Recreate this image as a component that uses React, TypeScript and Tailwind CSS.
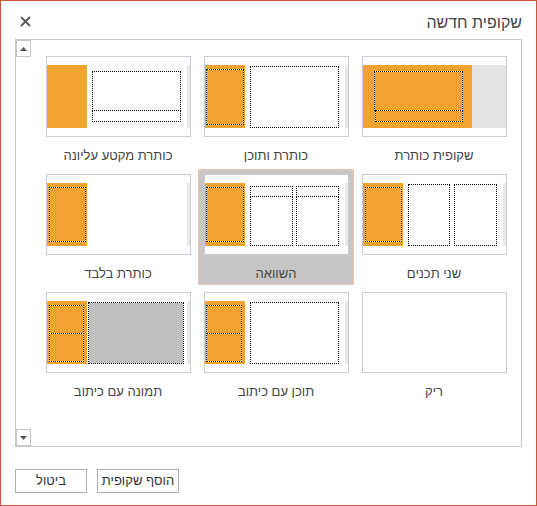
import React from 'react';

type Kind = 'orange' | 'lightgray' | 'gray' | 'dot' | 'dotOrange' | 'stripe';

interface Shape {
  l: number;
  t: number;
  w: number;
  h: number;
  kind: Kind;
}

interface Layout {
  label: string;
  shapes: Shape[];
  selected?: boolean;
}

const stripe: Shape = { l: 140, t: 0, w: 3, h: 63, kind: 'stripe' };
const titleBar: Shape = { l: 0, t: 0, w: 40, h: 63, kind: 'orange' };

const layouts: Layout[] = [
  {
    label: 'שקופית כותרת',
    shapes: [
      { l: 0, t: 0, w: 109, h: 63, kind: 'orange' },
      { l: 109, t: 0, w: 34, h: 63, kind: 'lightgray' },
      { l: 11, t: 6, w: 89, h: 40, kind: 'dotOrange' },
      { l: 12, t: 45, w: 88, h: 12, kind: 'dotOrange' },
    ],
  },
  {
    label: 'כותרת ותוכן',
    shapes: [
      titleBar,
      { l: 1, t: 4, w: 38, h: 56, kind: 'dotOrange' },
      { l: 45, t: 1, w: 89, h: 62, kind: 'dot' },
      stripe,
    ],
  },
  {
    label: 'כותרת מקטע עליונה',
    shapes: [
      titleBar,
      { l: 45, t: 6, w: 89, h: 40, kind: 'dot' },
      { l: 45, t: 45, w: 89, h: 12, kind: 'dot' },
      stripe,
    ],
  },
  {
    label: 'שני תכנים',
    shapes: [
      titleBar,
      { l: 2, t: 4, w: 37, h: 55, kind: 'dotOrange' },
      { l: 45, t: 1, w: 42, h: 62, kind: 'dot' },
      { l: 91, t: 1, w: 43, h: 62, kind: 'dot' },
      stripe,
    ],
  },
  {
    label: 'השוואה',
    selected: true,
    shapes: [
      titleBar,
      { l: 1, t: 4, w: 38, h: 55, kind: 'dotOrange' },
      { l: 45, t: 3, w: 43, h: 11, kind: 'dot' },
      { l: 45, t: 13, w: 43, h: 50, kind: 'dot' },
      { l: 91, t: 3, w: 43, h: 11, kind: 'dot' },
      { l: 91, t: 13, w: 43, h: 50, kind: 'dot' },
      stripe,
    ],
  },
  {
    label: 'כותרת בלבד',
    shapes: [titleBar, { l: 2, t: 4, w: 37, h: 55, kind: 'dotOrange' }, stripe],
  },
  {
    label: 'ריק',
    shapes: [],
  },
  {
    label: 'תוכן עם כיתוב',
    shapes: [
      titleBar,
      { l: 1, t: 4, w: 36, h: 29, kind: 'dotOrange' },
      { l: 1, t: 32, w: 36, h: 29, kind: 'dotOrange' },
      { l: 45, t: 1, w: 89, h: 62, kind: 'dot' },
      stripe,
    ],
  },
  {
    label: 'תמונה עם כיתוב',
    shapes: [
      titleBar,
      { l: 2, t: 4, w: 35, h: 29, kind: 'dotOrange' },
      { l: 2, t: 32, w: 35, h: 29, kind: 'dotOrange' },
      { l: 41, t: 1, w: 96, h: 62, kind: 'gray' },
      stripe,
    ],
  },
];

const fills: Record<Kind, string> = {
  orange: 'bg-[#f0a330]',
  lightgray: 'bg-[#e3e3e3]',
  gray: 'border border-dotted border-black bg-white',
  dot: 'border border-dotted border-black bg-white',
  dotOrange: 'border border-dotted border-black bg-white',
  stripe: 'bg-[#e9e9ea]',
};

function ShapeBox({ s }: { s: Shape }) {
  return (
    <div
      className={`absolute ${fills[s.kind]}`}
      style={{ left: s.l, top: s.t, width: s.w, height: s.h }}
    >
      {s.kind === 'dotOrange' && <div className="h-full w-full bg-[#f0a330]" />}
      {s.kind === 'gray' && <div className="h-full w-full bg-[#bfbfbf]" />}
    </div>
  );
}

function LayoutCell({ item }: { item: Layout }) {
  return (
    <div
      className={`flex h-[116px] flex-col items-center border pt-[4px] ${
        item.selected ? 'border-[#f6c5ab] bg-[#c6c6c6]' : 'border-transparent'
      }`}
    >
      <div className="h-[81px] w-[145px] border border-[#c8ccd5] bg-white py-[8px]" dir="ltr">
        <div className="relative h-[63px] w-full">
          {item.shapes.map((s, i) => (
            <ShapeBox key={i} s={s} />
          ))}
        </div>
      </div>
      <div className="mt-[11px] text-[13px] leading-[16px] text-[#444]">{item.label}</div>
    </div>
  );
}

function ScrollButton({ up }: { up?: boolean }) {
  return (
    <div className="flex h-[17px] w-[15px] items-center justify-center border border-[#c5c8cc] bg-white">
      <svg width="7" height="4" viewBox="0 0 7 4">
        <path d={up ? 'M0 4 L3.5 0 L7 4 Z' : 'M0 0 L3.5 4 L7 0 Z'} fill="#555" />
      </svg>
    </div>
  );
}

export default function App() {
  return (
    <div
      dir="rtl"
      className="flex h-[506px] w-[537px] flex-col border border-[#c9573c] bg-white px-[14px] text-[#444]"
      style={{ fontFamily: '"Liberation Sans", "DejaVu Sans", Arial, sans-serif' }}
    >
      <div className="flex h-[38px] items-center justify-between pt-[5px]">
        <div className="text-[16px] leading-[20px] text-[#444]">שקופית חדשה</div>
        <svg width="11" height="11" viewBox="0 0 11 11" className="ml-[5px] mt-[-2px]">
          <path d="M1 1 L10 10 M10 1 L1 10" stroke="#555" strokeWidth="1.8" />
        </svg>
      </div>

      <div className="flex h-[408px] border border-[#c5c8cc]">
        <div className="flex-1 pt-[11px] pr-[9px]">
          <div className="grid grid-cols-[156px_156px_156px] gap-[2px]">
            {layouts.map((item) => (
              <LayoutCell key={item.label} item={item} />
            ))}
          </div>
        </div>
        <div className="flex w-[15px] flex-col justify-between">
          <ScrollButton up />
          <ScrollButton />
        </div>
      </div>

      <div className="mt-[22px] flex justify-end gap-[10px]">
        <button className="h-[24px] w-[82px] border border-[#adadad] bg-white text-[13px] text-[#333]">
          הוסף שקופית
        </button>
        <button className="h-[24px] w-[72px] border border-[#adadad] bg-white text-[13px] text-[#333]">
          ביטול
        </button>
      </div>
    </div>
  );
}
